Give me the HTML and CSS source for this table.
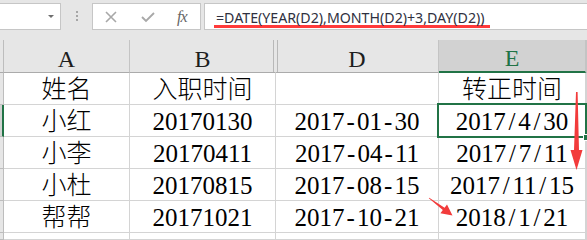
FILE: index.html
```html
<!DOCTYPE html>
<html lang="zh-CN">
<head>
<meta charset="utf-8">
<title>Excel</title>
<link rel="stylesheet" href="styles.css">
</head>
<body>
<div class="toolbar">
  <div class="namebox"><span class="caret"></span></div>
  <div class="grip"><i></i><i></i><i></i></div>
  <div class="fxbox">
    <svg class="ico-x" width="12" height="12" viewBox="0 0 12 12"><path d="M1 1 L11 11 M11 1 L1 11" stroke="#a8a8a8" stroke-width="1.6" fill="none"/></svg>
    <svg class="ico-ok" width="14" height="12" viewBox="0 0 14 12"><path d="M1 6 L5 10 L13 2" stroke="#a8a8a8" stroke-width="1.8" fill="none"/></svg>
    <span class="fx">fx</span>
  </div>
  <div class="formula"><span class="ftext">=DATE(YEAR(D2),MONTH(D2)+3,DAY(D2))</span></div>
</div>

<div class="sheet">
  <div class="rh ch"></div>
  <div class="ch">A</div>
  <div class="ch hb">B</div>
  <div class="ch hd">D</div>
  <div class="ch sel">E</div>
  <div class="ch"></div>

  <div class="rh"></div>
  <div class="c">姓名</div>
  <div class="c">入职时间</div>
  <div class="c"></div>
  <div class="c">转正时间</div>
  <div class="c"></div>

  <div class="rh sel"></div>
  <div class="c">小红</div>
  <div class="c">20170130</div>
  <div class="c">2017<span class="s">-</span>01<span class="s">-</span>30</div>
  <div class="c active">2017<span class="s">/</span>4<span class="s">/</span>30</div>
  <div class="c"></div>

  <div class="rh"></div>
  <div class="c">小李</div>
  <div class="c">20170411</div>
  <div class="c">2017<span class="s">-</span>04<span class="s">-</span>11</div>
  <div class="c">2017<span class="s">/</span>7<span class="s">/</span>11</div>
  <div class="c"></div>

  <div class="rh"></div>
  <div class="c">小杜</div>
  <div class="c">20170815</div>
  <div class="c">2017<span class="s">-</span>08<span class="s">-</span>15</div>
  <div class="c">2017<span class="s">/</span>11<span class="s">/</span>15</div>
  <div class="c"></div>

  <div class="rh"></div>
  <div class="c">帮帮</div>
  <div class="c">20171021</div>
  <div class="c">2017<span class="s">-</span>10<span class="s">-</span>21</div>
  <div class="c">2018<span class="s">/</span>1<span class="s">/</span>21</div>
  <div class="c"></div>

  <div class="rh"></div>
  <div class="c"></div>
  <div class="c"></div>
  <div class="c"></div>
  <div class="c"></div>
  <div class="c"></div>
</div>

<svg class="marks" width="587" height="240" viewBox="0 0 587 240">
  <polygon fill="#f23b3b" points="576,92 577.6,92 579,150 582.5,150 576.5,170 570.5,150 574,150"/>
  <polygon fill="#f23b3b" points="429.2,197.7 444.6,207.7 447,204.5 452.5,215.5 440.4,213.3 442.8,210.1 428.8,198.3"/>
</svg>
</body>
</html>
```

FILE: styles.css
```css
html, body {
  margin: 0;
  padding: 0;
}
body {
  width: 587px;
  height: 240px;
  overflow: hidden;
  position: relative;
  background: #e6e6e6;
  font-family: "Liberation Serif", "Noto Sans CJK SC", serif;
}

/* ---------- formula bar ---------- */
.toolbar {
  display: flex;
  height: 30px;
  padding-top: 3px;
  box-sizing: border-box;
}
.namebox {
  width: 61px;
  height: 27px;
  box-sizing: border-box;
  background: #fff;
  border: 1px solid #c6c6c6;
  border-left: none;
  display: flex;
  align-items: center;
  justify-content: flex-end;
  padding-right: 6px;
}
.caret {
  width: 0;
  height: 0;
  border-left: 3px solid transparent;
  border-right: 3px solid transparent;
  border-top: 3px solid #6e6e6e;
  margin-top: -1px;
}
.grip {
  width: 31px;
  display: flex;
  flex-direction: column;
  align-items: center;
  justify-content: center;
  gap: 2px;
  margin-top: -2px;
}
.grip i {
  display: block;
  width: 2px;
  height: 2px;
  background: #a6a6a6;
}
.fxbox {
  width: 109px;
  height: 27px;
  box-sizing: border-box;
  background: #fff;
  border: 1px solid #c6c6c6;
  display: flex;
  align-items: center;
}
.ico-x {
  margin-left: 12px;
  margin-top: 1px;
}
.ico-ok {
  margin-left: 24px;
  margin-top: 1px;
}
.fx {
  margin-left: 22px;
  font-family: "Liberation Serif", serif;
  font-style: italic;
  font-size: 16px;
  color: #666;
  letter-spacing: -1px;
}
.formula {
  flex: 1;
  margin-left: 3px;
  height: 27px;
  box-sizing: border-box;
  background: #fff;
  border: 1px solid #c6c6c6;
  border-right: none;
  padding: 5px 0 0 9px;
}
.ftext {
  display: inline-block;
  font-family: "Noto Sans", sans-serif;
  font-size: 14.2px;
  line-height: 15px;
  color: #2f3040;
  padding: 0 5px 0 2px;
  border-bottom: 3px solid #ff3a3a;
}

/* ---------- sheet ---------- */
.sheet {
  display: grid;
  grid-template-columns: 4px 126px 146px 163px 147px 1fr;
  grid-template-rows: 33px repeat(5, 32px) 7px;
  margin-top: 10px;
}
.ch {
  background: #e6e6e6;
  border-right: 1px solid #c4c4c4;
  border-bottom: 1px solid #ababab;
  box-sizing: border-box;
  display: flex;
  justify-content: center;
  align-items: flex-end;
  font-size: 24px;
  line-height: 26px;
  color: #1e1e1e;
}
.ch.hb {
  border-right-color: #e6e6e6;
  box-shadow: inset -1px 0 0 #e6e6e6, inset -2px 0 0 #b8b8b8;
}
.ch.hd {
  box-shadow: inset 1px 0 0 #e6e6e6, inset 2px 0 0 #b8b8b8;
}
.ch.sel {
  background: #d2d2d2;
  color: #217346;
  border-bottom: 2px solid #217346;
}
.rh {
  background: #e6e6e6;
  border-right: 1px solid #bdbdbd;
  border-bottom: 1px solid #bdbdbd;
  box-sizing: border-box;
}
.rh.ch {
  border-bottom-color: #ababab;
}
.rh.sel {
  background: #d2d2d2;
  border-right: 2px solid #217346;
}
.c {
  background: #fff;
  border-right: 1px solid #d4d4d4;
  border-bottom: 1px solid #d4d4d4;
  box-sizing: border-box;
  display: flex;
  justify-content: center;
  align-items: flex-end;
  font-size: 25px;
  font-weight: 300;
  line-height: 28px;
  color: #000;
  white-space: nowrap;
  overflow: visible;
}
.s {
  display: inline-block;
  width: 0.5em;
  text-align: center;
}
.active {
  position: relative;
}
.active::after {
  content: "";
  position: absolute;
  left: -2px;
  top: -2px;
  right: -2px;
  bottom: -2px;
  border: 2px solid #217346;
  z-index: 2;
}
.active::before {
  content: "";
  position: absolute;
  width: 5px;
  height: 5px;
  right: -5px;
  bottom: -5px;
  background: #217346;
  border: 1px solid #fff;
  z-index: 3;
}

/* annotation arrows drawn over the sheet */
.marks {
  position: absolute;
  left: 0;
  top: 0;
  pointer-events: none;
  z-index: 5;
}
```
